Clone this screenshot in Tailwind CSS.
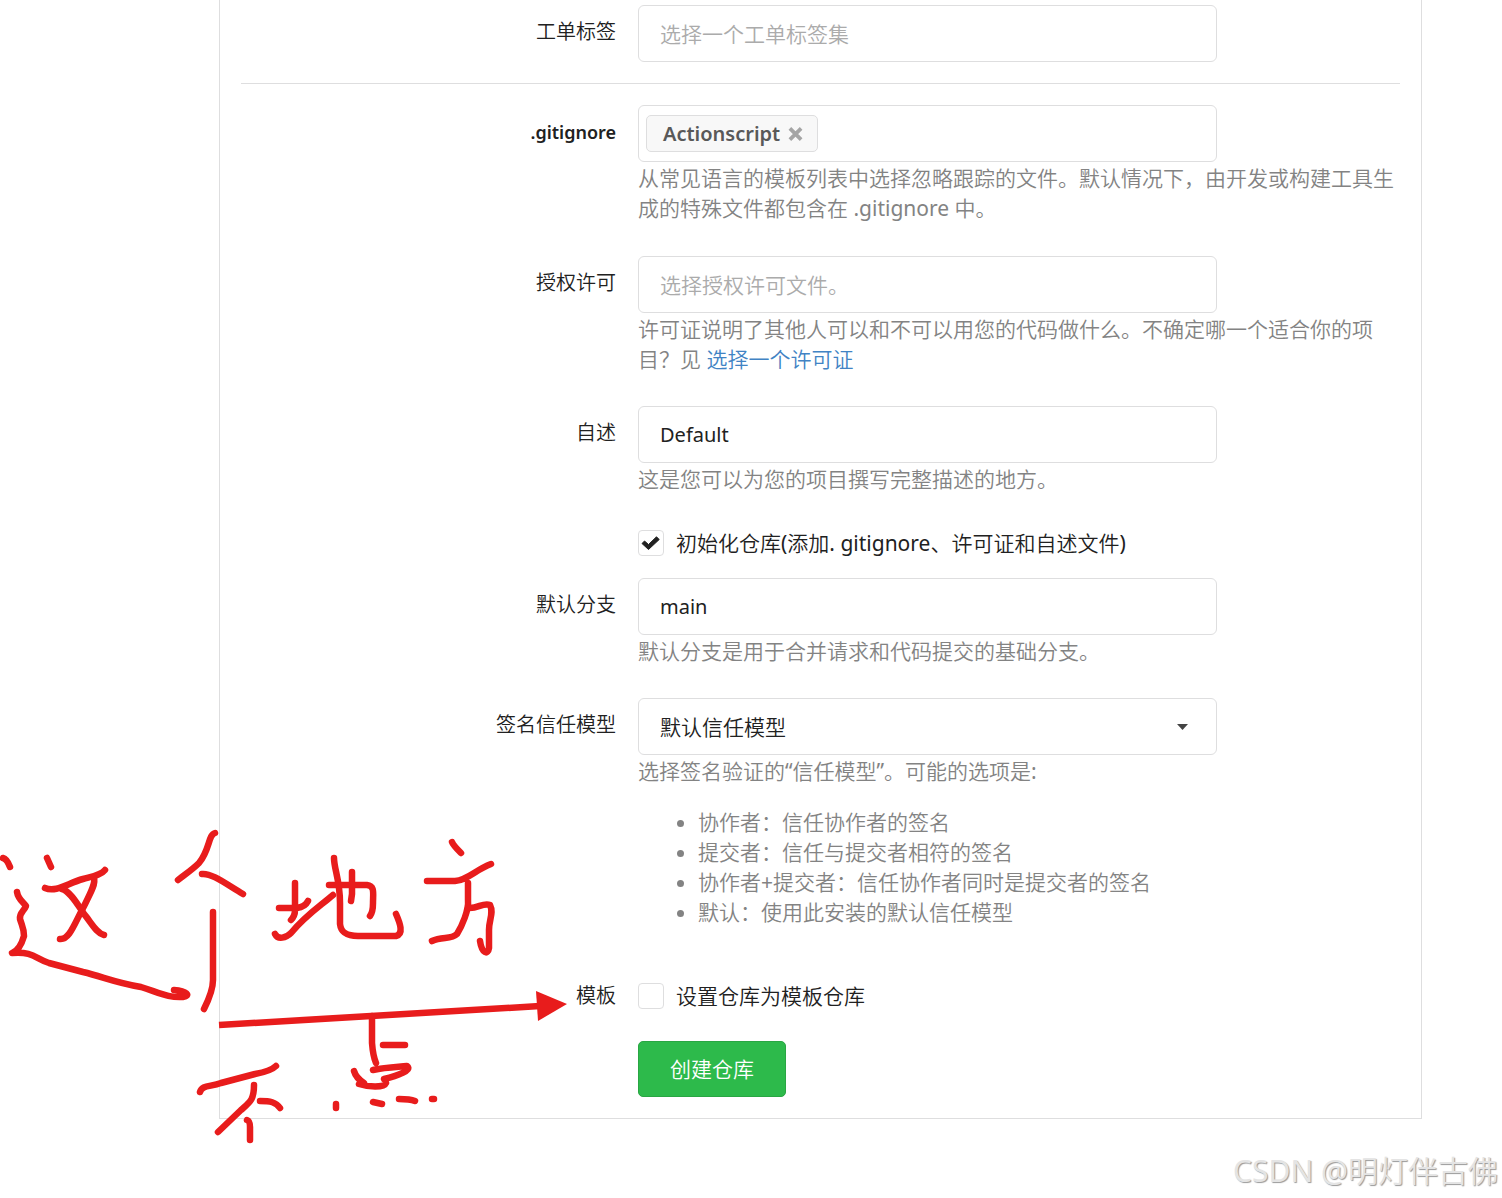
<!DOCTYPE html>
<html lang="zh-CN">

<head>
    <meta charset="UTF-8">
    <meta name="viewport" content="width=device-width, initial-scale=1.0">
    <title>创建仓库</title>
    <script src="https://cdn.jsdelivr.net/npm/@tailwindcss/browser@4"></script>
    <style>
        body {
            font-family: 'Noto Sans', 'Noto Sans CJK SC DemiLight', 'Noto Sans CJK SC', sans-serif;
        }
    </style>
</head>

<body class="relative bg-white text-[21px] leading-[30px] text-[#212121] overflow-x-hidden">

    <!-- Repository form -->
    <form class="ml-[219px] mr-[80px] px-[21px] pt-[5px] pb-[21px] border border-t-0 border-[#dededf]">

        <div class="flex gap-[22px]">
            <label for="issue-labels" class="w-[375px] shrink-0 mt-3 text-right text-[20px]">工单标签</label>
            <div class="flex-1">
                <input id="issue-labels" type="text" placeholder="选择一个工单标签集"
                    class="block w-[579px] h-[57px] px-[21px] border border-[#dededf] rounded-md placeholder:text-[#ababab]">
            </div>
        </div>

        <hr class="my-[21px] border-[#dededf]">

        <div class="flex gap-[22px] mb-[33px]">
            <label for="gitignore" class="w-[375px] shrink-0 mt-3 text-right text-[18px] font-semibold">.gitignore</label>
            <div class="flex-1">
                <div class="flex items-center w-[579px] h-[57px] px-[7px] border border-[#dededf] rounded-md">
                    <span class="flex items-center gap-2 h-[37px] pl-4 pr-[14px] border border-[#dededf] rounded-[5px] bg-[#f8f8f8] text-[20px] font-semibold text-[#595959]">
                        Actionscript
                        <button type="button" aria-label="移除" class="text-[#a5a5a5]">
                            <svg width="15" height="16" viewBox="0 0 16 16" fill="none" stroke="currentColor" stroke-width="4">
                                <path d="M2 2L14 14M14 2L2 14"></path>
                            </svg>
                        </button>
                    </span>
                    <input id="gitignore" type="text" class="flex-1 min-w-0 h-full outline-none">
                </div>
                <p class="mt-px text-[#838383]">从常见语言的模板列表中选择忽略跟踪的文件。默认情况下，由开发或构建工具生成的特殊文件都包含在 .gitignore 中。</p>
            </div>
        </div>

        <div class="flex gap-[22px] mb-8">
            <label for="license" class="w-[375px] shrink-0 mt-3 text-right text-[20px]">授权许可</label>
            <div class="flex-1">
                <input id="license" type="text" placeholder="选择授权许可文件。"
                    class="block w-[579px] h-[57px] px-[21px] border border-[#dededf] rounded-md placeholder:text-[#ababab]">
                <p class="mt-px text-[#838383]">许可证说明了其他人可以和不可以用您的代码做什么。不确定哪一个适合你的项目？见 <a href="#" class="inline-block text-[#4183c4]">选择一个许可证</a></p>
            </div>
        </div>

        <div class="flex gap-[22px] mb-8">
            <label for="readme" class="w-[375px] shrink-0 mt-3 text-right text-[20px]">自述</label>
            <div class="flex-1">
                <input id="readme" type="text" value="Default"
                    class="block w-[579px] h-[57px] px-[21px] border border-[#dededf] rounded-md text-[20px]">
                <p class="mt-px text-[#838383]">这是您可以为您的项目撰写完整描述的地方。</p>
            </div>
        </div>

        <div class="flex items-center h-[34px] mb-[18px] pl-[397px]">
            <span class="grid mr-3">
                <input id="auto-init" type="checkbox" checked
                    class="peer col-start-1 row-start-1 appearance-none size-[26px] border border-[#dededf] rounded">
                <svg class="col-start-1 row-start-1 size-[26px] pointer-events-none hidden peer-checked:block" viewBox="0 0 26 26"
                    fill="currentColor" stroke="currentColor" stroke-linejoin="round">
                    <path d="M4 13.500L6.500 11L10.500 14.500L18.500 6.800L21.200 9.500L10.500 19.500Z"></path>
                </svg>
            </span>
            <label for="auto-init">初始化仓库(添加. gitignore、许可证和自述文件)</label>
        </div>

        <div class="flex gap-[22px] mb-8">
            <label for="default-branch" class="w-[375px] shrink-0 mt-3 text-right text-[20px]">默认分支</label>
            <div class="flex-1">
                <input id="default-branch" type="text" value="main"
                    class="block w-[579px] h-[57px] px-[21px] border border-[#dededf] rounded-md text-[20px]">
                <p class="mt-px text-[#838383]">默认分支是用于合并请求和代码提交的基础分支。</p>
            </div>
        </div>

        <div class="flex gap-[22px] mb-[52px]">
            <label for="trust-model" class="w-[375px] shrink-0 mt-3 text-right text-[20px]">签名信任模型</label>
            <div class="flex-1">
                <div class="grid items-center w-[579px]">
                    <select id="trust-model"
                        class="col-start-1 row-start-1 appearance-none w-full h-[57px] px-[21px] border border-[#dededf] rounded-md">
                        <option>默认信任模型</option>
                    </select>
                    <svg class="col-start-1 row-start-1 justify-self-end mr-[29px] pointer-events-none" width="11" height="6"
                        viewBox="0 0 11 6" fill="#444">
                        <path d="M0 0H11L5.500 6Z"></path>
                    </svg>
                </div>
                <div class="mt-px text-[#838383]">
                    <p>选择签名验证的“信任模型”。可能的选项是:</p>
                    <ul class="mt-[21px] pl-[60px] list-disc">
                        <li>协作者：信任协作者的签名</li>
                        <li>提交者：信任与提交者相符的签名</li>
                        <li>协作者+提交者：信任协作者同时是提交者的签名</li>
                        <li>默认：使用此安装的默认信任模型</li>
                    </ul>
                </div>
            </div>
        </div>

        <div class="flex items-center h-[34px] mb-7">
            <span class="w-[375px] shrink-0 mr-[22px] text-right text-[20px]">模板</span>
            <input id="template" type="checkbox" class="appearance-none size-[26px] mr-3 border border-[#dededf] rounded">
            <label for="template">设置仓库为模板仓库</label>
        </div>

        <button type="submit"
            class="block ml-[397px] h-14 px-[31px] border border-[#29a643] rounded-[5px] bg-[#2dba4b] text-white">创建仓库</button>
    </form>

    <!-- Watermark -->
    <p class="mt-8 pr-1 text-right text-[30px] leading-10 text-[#e4e4e4] [text-shadow:1px_1px_1px_#999]">CSDN @明灯伴古佛</p>

    <!-- Red pen notes -->
    <svg class="absolute top-0 left-0 pointer-events-none" width="600" height="1198" viewBox="0 0 600 1198" fill="none"
        stroke="#e81c1c" stroke-width="6.500" stroke-linecap="round" stroke-linejoin="round">
        <path d="M3 858Q7 859 10 867M47 858L51 867"></path>
        <path d="M45 888C56 893 68 883 83 879C94 876 101 875 105 870"></path>
        <path d="M94 878C96 884 90 894 82 910C74 925 69 940 60 939"></path>
        <path d="M62 889C70 891 78 905 84 914C91 922 96 933 104 935"></path>
        <path d="M17 892C18 899 23 902 26 906C24 911 19 913 20 919C22 926 24 928 24 936C22 943 18 951 12 953C33 951 36 959 49 963L83 972C104 977 113 982 141 987C160 993 169 998 183 997C191 996 187 991 174 990"></path>
        <path d="M215 833C208 835 210 850 199 863C193 869 187 873 178 880M202 874C212 873 226 884 243 894M213 912V980C213 990 209 999 204 1009"></path>
        <path d="M295 883V910Q295 916 291 920M279 908H297Q305 907 308 901M275 934C278 940 286 938 291 933C306 915 319 907 333 895"></path>
        <path d="M334 858C334 869 340 880 340 903V924C341 933 347 936 358 936H396C404 934 400 923 396 914"></path>
        <path d="M329 885H367C375 886 373 893 373 903Q373 912 370 916M352 872V894L351 901"></path>
        <path d="M452 842Q453 845 461 853M427 881H455C468 880 475 870 491 864M468 883V900C469 910 462 926 457 934C451 940 442 936 432 941"></path>
        <path d="M468 908C478 909 483 902 490 905C494 913 489 919 489 930V948C488 955 482 954 480 941"></path>
        <path d="M200 1092C202 1085 210 1087 221 1083L255 1074C266 1072 272 1070 276 1066M254 1085C254 1100 250 1102 241 1110L218 1132M260 1101C270 1101 276 1102 280 1108M247 1120Q250 1121 250 1127V1140"></path>
        <path d="M372 1016V1043Q373 1056 376 1063M383 1045H405M373 1070C387 1067 398 1067 407 1066C413 1070 397 1076 384 1079M354 1071Q356 1078 364 1083M359 1084C368 1087 384 1088 386 1083"></path>
        <path d="M336 1104V1108M373 1102L382 1104M399 1099Q410 1099 415 1101M432 1099H434"></path>
        <path d="M219 1025L540 1006" stroke-linecap="butt"></path>
        <path d="M536 991L567 1004L538 1021Z" fill="#e81c1c" stroke="none"></path>
    </svg>

</body>

</html>
